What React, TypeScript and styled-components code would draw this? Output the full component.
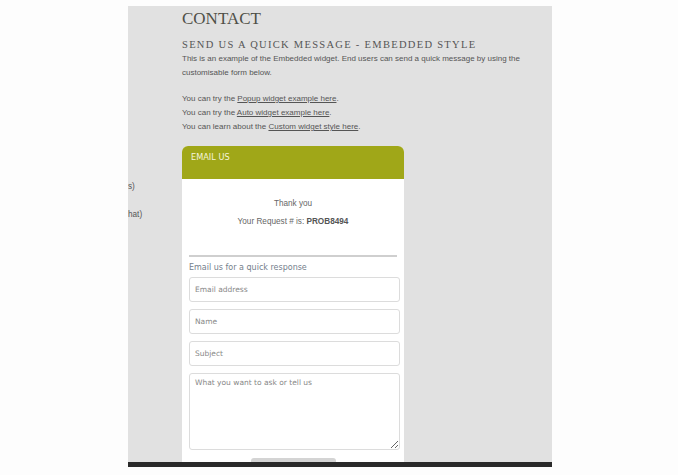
import * as React from 'react';
import styled, { createGlobalStyle } from 'styled-components';

const GlobalStyle = createGlobalStyle`
    html, body {
        margin: 0;
        padding: 0;
        background: #fdfdfd;
    }
`;

const Page = styled.div`
    width: 424px;
    margin-left: 128px;
    padding-top: 6px;
`;

const Panel = styled.div`
    height: 456px;
    overflow: hidden;
    background: #e1e1e1;
    display: grid;
    grid-template-columns: 54px 1fr;
`;

const Sidebar = styled.div`
    padding-top: 169px;
    font-family: "Liberation Sans", Arial, sans-serif;
    font-size: 8.2px;
    color: #555;
`;

const SideLine = styled.div`
    height: 28px;
    line-height: 24px;
`;

const Main = styled.div`
    padding-top: 2px;
    color: #555;
`;

const Title = styled.h1`
    margin: 0;
    font-family: "Liberation Serif", "Times New Roman", serif;
    font-weight: normal;
    font-size: 17px;
    line-height: 22px;
    color: #4f4f47;
`;

const Subtitle = styled.h2`
    margin: 8px 0 0;
    font-family: "Liberation Serif", "Times New Roman", serif;
    font-weight: normal;
    font-size: 10.5px;
    letter-spacing: 1.3px;
    line-height: 14px;
    color: #555;
`;

const Copy = styled.p`
    margin: 0 0 12px;
    width: 345px;
    font-family: "Liberation Sans", Arial, sans-serif;
    font-size: 8px;
    line-height: 14px;
    color: #555;
`;

const Link = styled.a`
    color: #555;
    text-decoration: underline;
`;

const Card = styled.div`
    margin-top: 10px;
    width: 222px;
    background: #fff;
    border-radius: 6px 6px 0 0;
    font-family: "DejaVu Sans", Verdana, sans-serif;
`;

const CardHeader = styled.div`
    height: 33px;
    padding: 5px 9px 0;
    box-sizing: border-box;
    background: #a0a718;
    border-radius: 6px 6px 0 0;
    color: #f4f4dc;
    font-size: 8.2px;
    line-height: 12px;
`;

const Receipt = styled.div`
    box-sizing: border-box;
    height: 76px;
    padding-top: 16px;
    text-align: center;
    font-family: "Liberation Sans", Arial, sans-serif;
    font-size: 8.2px;
    line-height: 18px;
    color: #666;

    strong {
        color: #555;
    }
`;

const Form = styled.div`
    padding: 0 4px 0 7px;
    display: flex;
    flex-direction: column;
    gap: 7px;
`;

const Divider = styled.hr`
    margin: 0 3px 0 0;
    border: none;
    height: 2px;
    background: #cfcfcf;
`;

const FormLabel = styled.div`
    margin-top: -2px;
    margin-bottom: -4px;
    font-size: 8px;
    line-height: 12px;
    color: #74808c;
`;

const Field = styled.input`
    height: 25px;
    box-sizing: border-box;
    padding: 0 5px;
    border: 1px solid #dcdcdc;
    border-radius: 3px;
    font-family: "DejaVu Sans", Verdana, sans-serif;
    font-size: 7.5px;
    color: #555;
    background: #fff;
    outline: none;

    &::placeholder {
        color: #888;
    }
`;

const Message = styled.textarea`
    height: 77px;
    box-sizing: border-box;
    padding: 4px 5px;
    border: 1px solid #dcdcdc;
    border-radius: 3px;
    font-family: "DejaVu Sans", Verdana, sans-serif;
    font-size: 7.5px;
    color: #555;
    resize: vertical;
    outline: none;

    &::placeholder {
        color: #888;
    }
`;

const SubmitRow = styled.div`
    display: flex;
    justify-content: center;
    padding-right: 2px;
    margin-top: 1px;
`;

const Submit = styled.button`
    width: 85px;
    height: 20px;
    border: none;
    border-radius: 3px;
    background: #d4d4d4;
`;

const Footer = styled.div`
    height: 5px;
    background: #2a2a2a;
`;

export default function App() {
    return (
        <>
            <GlobalStyle />
            <Page>
                <Panel>
                    <Sidebar>
                        <SideLine>s)</SideLine>
                        <SideLine>hat)</SideLine>
                    </Sidebar>
                    <Main>
                        <Title>CONTACT</Title>
                        <Subtitle>SEND US A QUICK MESSAGE - EMBEDDED STYLE</Subtitle>
                        <Copy>
                            This is an example of the Embedded widget. End users can send a quick message by using the
                            customisable form below.
                        </Copy>
                        <Copy>
                            You can try the <Link href="#">Popup widget example here</Link>.<br />
                            You can try the <Link href="#">Auto widget example here</Link>.<br />
                            You can learn about the <Link href="#">Custom widget style here</Link>.
                        </Copy>
                        <Card>
                            <CardHeader>EMAIL US</CardHeader>
                            <Receipt>
                                Thank you<br />
                                Your Request # is: <strong>PROB8494</strong>
                            </Receipt>
                            <Form>
                                <Divider />
                                <FormLabel>Email us for a quick response</FormLabel>
                                <Field placeholder="Email address" />
                                <Field placeholder="Name" />
                                <Field placeholder="Subject" />
                                <Message placeholder="What you want to ask or tell us" />
                                <SubmitRow>
                                    <Submit />
                                </SubmitRow>
                            </Form>
                        </Card>
                    </Main>
                </Panel>
                <Footer />
            </Page>
        </>
    );
}
